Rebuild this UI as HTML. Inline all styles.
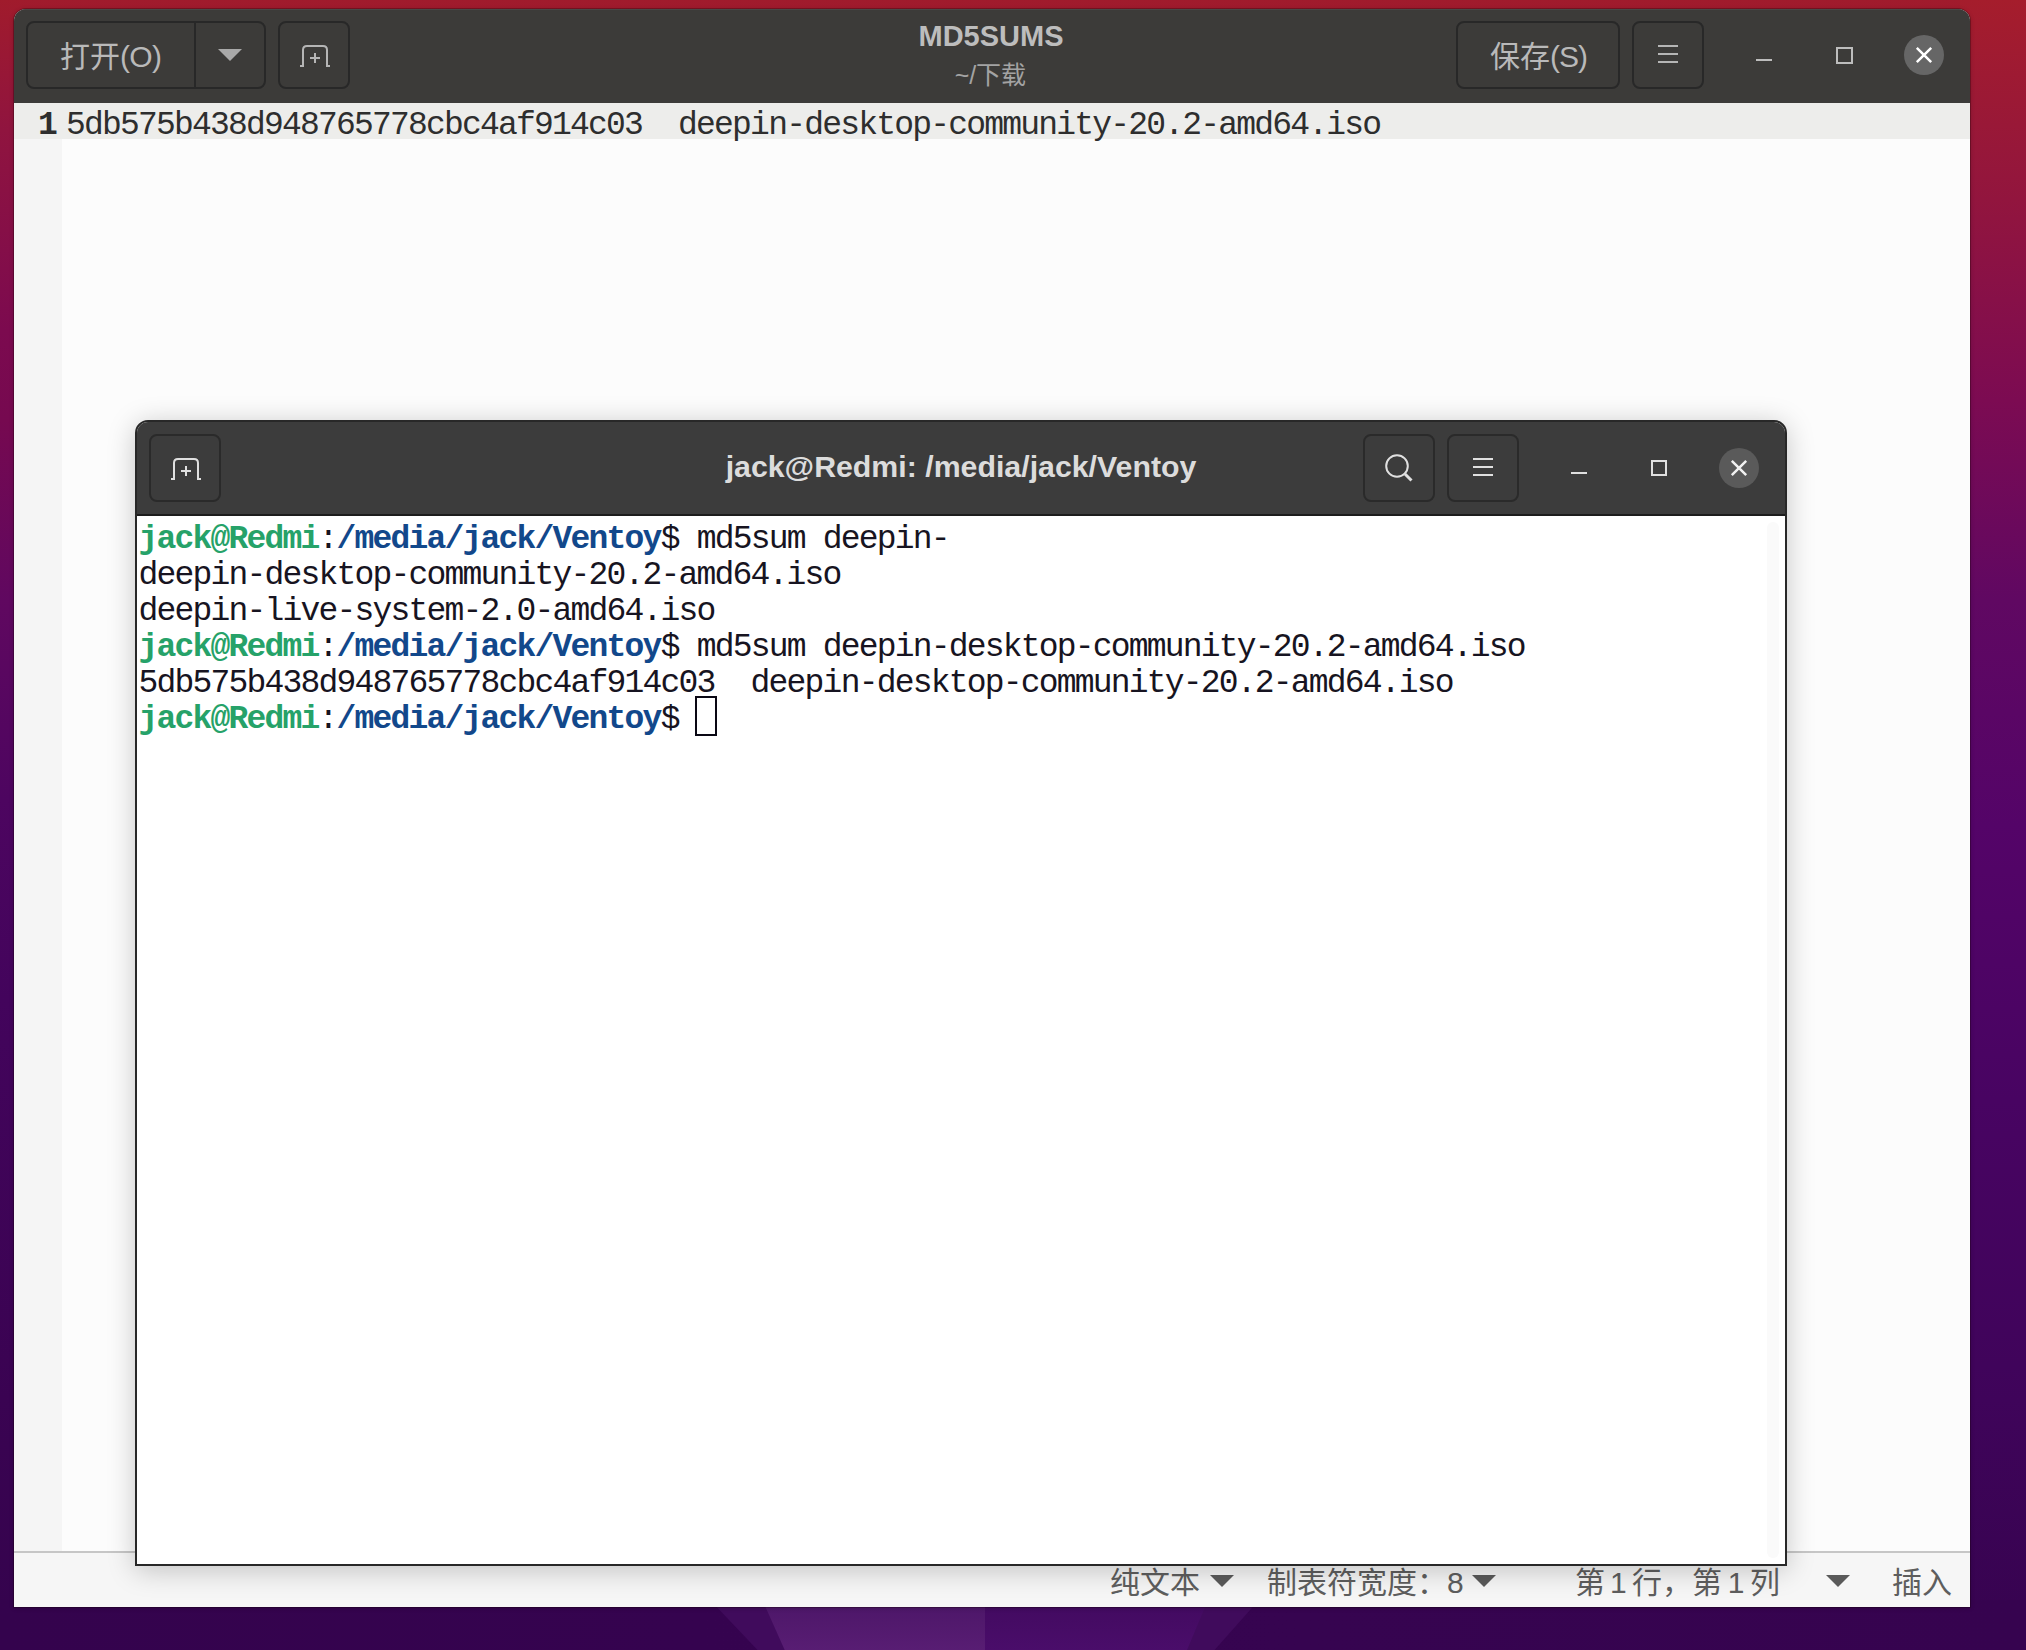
<!DOCTYPE html>
<html lang="zh-CN"><head><meta charset="utf-8">
<style>
html,body{margin:0;padding:0;width:2026px;height:1650px;overflow:hidden;}
body{position:relative;font-family:"Liberation Sans",sans-serif;
background:linear-gradient(to bottom,#a01b2c 0px,#90143f 130px,#7c0a4f 330px,#760950 420px,#600860 600px,#4d0560 800px,#43045c 1000px,#3a0352 1400px,#34034d 1650px);}
.abs{position:absolute;}
#gedit{left:14px;top:9px;width:1956px;height:1598px;border-radius:12px 12px 0 0;overflow:hidden;
box-shadow:0 0 0 1px rgba(20,0,5,0.28),0 1px 5px rgba(0,0,0,0.22);background:#fcfcfc;}
#ghead{left:0;top:0;width:1956px;height:94px;background:#3c3b39;box-shadow:inset 0 1px 0 #484847;}
.btn{position:absolute;box-sizing:border-box;border:2px solid #282828;border-radius:8px;}
.glbl{color:#b9b9b9;font-size:30px;white-space:nowrap;}
#curline{left:0;top:94px;width:1956px;height:36px;background:#ededeb;}
#gutter{left:0;top:130px;width:48px;height:1412px;background:#f5f5f5;}
#gsep{left:0;top:1542px;width:1956px;height:2px;background:#c6c6c6;}
#gstatus{left:0;top:1544px;width:1956px;height:54px;background:#f6f6f6;}
.mono{font-family:"Liberation Mono",monospace;font-size:33px;letter-spacing:-1.8px;white-space:pre;line-height:36px;}
.stat{color:#5e5e5e;font-size:30px;white-space:nowrap;}
#term{left:135px;top:420px;width:1652px;height:1146px;box-sizing:border-box;border:2px solid #282828;border-radius:13px 13px 0 0;overflow:hidden;background:#fff;
box-shadow:0 4px 28px rgba(0,0,0,0.22);}
#thead{left:0;top:0;width:1648px;height:92px;background:#3c3c3c;border-bottom:2px solid #1c1c1c;}
.tbtn{position:absolute;box-sizing:border-box;border:2px solid #2a2a2a;border-radius:8px;}
.g{color:#26a269;font-weight:bold;}
.b{color:#12488b;font-weight:bold;}
.k{color:#171421;}
</style></head><body>

<div class="abs" style="left:1960px;top:0;width:66px;height:1650px;background:linear-gradient(to bottom,#a51d2c 0px,#92153e 200px,#7c0b52 400px,#600862 600px,#540468 825px,#480462 1100px,#3f045a 1400px,#36034f 1650px);"></div>
<div class="abs" style="left:0;top:1600px;width:2026px;height:50px;background:linear-gradient(to right,#34034d 0px,#35034f 700px,#360450 1300px,#36034f 2026px);"></div>
<!-- bottom wallpaper shapes -->
<svg class="abs" style="left:0;top:1600px" width="2026" height="50">
<defs><linearGradient id="mg" x1="0" y1="0" x2="0" y2="1"><stop offset="0" stop-color="#4c1668"/><stop offset="1" stop-color="#581d73"/></linearGradient>
<linearGradient id="rg" x1="0" y1="0" x2="0" y2="1"><stop offset="0" stop-color="#420a60"/><stop offset="1" stop-color="#4a0d6a"/></linearGradient></defs>
<polygon points="710,0 1259,0 1214.6,50 757.5,50" fill="#400b5c"/>
<polygon points="762.4,0 985,0 985,50 784.7,50" fill="url(#mg)"/>
<polygon points="985,0 1208,0 1187,50 985,50" fill="url(#rg)"/>
</svg>

<div id="gedit" class="abs">
  <div id="ghead" class="abs">
    <div class="btn" style="left:12px;top:12px;width:240px;height:68px;"></div>
    <div class="abs" style="left:180px;top:14px;width:2px;height:64px;background:#282828"></div>
    <div class="abs glbl" style="left:46px;top:23px;">打开<span style="letter-spacing:-0.7px">(O)</span></div>
    <svg class="abs" style="left:204px;top:40px" width="24" height="13"><polygon points="0,0 24,0 12,12" fill="#a9a9a9"/></svg>
    <div class="btn" style="left:264px;top:12px;width:72px;height:68px;"></div>
    <svg class="abs" style="left:264px;top:12px" width="72" height="68" fill="none" stroke="#b5b5b5" stroke-width="2">
      <path d="M22,45 H25 V29 Q25,25 29,25 H45 Q49,25 49,29 V45 H52"/>
      <path d="M32,37 H42 M37,32 V42"/>
    </svg>
    <div class="abs" style="left:0;top:10px;width:1954px;text-align:center;color:#bdbdbd;font-weight:bold;font-size:29px;line-height:34px;">MD5SUMS</div>
    <div class="abs" style="left:0;top:51px;width:1953px;text-align:center;color:#a3a3a3;font-size:25px;line-height:30px;">~/下载</div>
    <div class="btn" style="left:1442px;top:12px;width:164px;height:68px;"></div>
    <div class="abs glbl" style="left:1476px;top:23px;">保存<span style="letter-spacing:-1px">(S)</span></div>
    <div class="btn" style="left:1618px;top:12px;width:72px;height:68px;"></div>
    <svg class="abs" style="left:1618px;top:12px" width="72" height="68" fill="none" stroke="#b5b5b5" stroke-width="2">
      <path d="M26,25 H46 M26,33 H46 M26,41 H46"/>
    </svg>
    <svg class="abs" style="left:1730px;top:20px" width="220" height="70">
      <path d="M12,31 H28" stroke="#bdbdbd" stroke-width="2"/>
      <rect x="93" y="19" width="15" height="15" fill="none" stroke="#bdbdbd" stroke-width="2"/>
      <circle cx="180" cy="26" r="20" fill="#666666"/>
      <path d="M172.8,18.8 L187.2,33.2 M187.2,18.8 L172.8,33.2" stroke="#ffffff" stroke-width="2.5"/>
    </svg>
  </div>
  <div id="curline" class="abs"></div>
  <div id="gutter" class="abs"></div>
  <div class="abs mono" style="left:24px;top:98.5px;color:#2e2e2e;font-weight:bold;">1</div>
  <div class="abs mono" style="left:52px;top:98.5px;color:#2e2e2e;">5db575b438d948765778cbc4af914c03  deepin-desktop-community-20.2-amd64.iso</div>
  <div id="gsep" class="abs"></div>
  <div id="gstatus" class="abs">
    <div class="abs stat" style="left:1096px;top:4.5px;">纯文本</div>
    <svg class="abs" style="left:1196px;top:22px" width="24" height="13"><polygon points="0,0 24,0 12,12" fill="#5a5a5a"/></svg>
    <div class="abs stat" style="left:1253px;top:4.5px;">制表符宽度：8</div>
    <svg class="abs" style="left:1458px;top:22px" width="24" height="13"><polygon points="0,0 24,0 12,12" fill="#5a5a5a"/></svg>
    <div class="abs stat" style="left:1560.5px;top:4.5px;word-spacing:-2.8px;">第 1 行，第 1 列</div>
    <svg class="abs" style="left:1812px;top:22px" width="24" height="13"><polygon points="0,0 24,0 12,12" fill="#5a5a5a"/></svg>
    <div class="abs stat" style="left:1878px;top:4.5px;">插入</div>
  </div>
</div>

<div id="term" class="abs">
  <div id="thead" class="abs">
    <div class="tbtn" style="left:12px;top:12px;width:72px;height:68px;"></div>
    <svg class="abs" style="left:12px;top:12px" width="72" height="68" fill="none" stroke="#e0e0e0" stroke-width="2">
      <path d="M22,45 H25 V29 Q25,25 29,25 H45 Q49,25 49,29 V45 H52"/>
      <path d="M32,37 H42 M37,32 V42"/>
    </svg>
    <div class="abs" style="left:0;top:28px;width:1648px;text-align:center;color:#dcdcdc;font-weight:bold;font-size:30.3px;line-height:34px;">jack@Redmi: /media/jack/Ventoy</div>
    <div class="tbtn" style="left:1226px;top:12px;width:72px;height:68px;"></div>
    <svg class="abs" style="left:1226px;top:12px" width="72" height="68" fill="none" stroke="#e0e0e0" stroke-width="2">
      <circle cx="34" cy="32" r="10.8"/>
      <path d="M42,40 L48.5,46.5" stroke-width="3"/>
    </svg>
    <div class="tbtn" style="left:1310px;top:12px;width:72px;height:68px;"></div>
    <svg class="abs" style="left:1310px;top:12px" width="72" height="68" fill="none" stroke="#e0e0e0" stroke-width="2">
      <path d="M26,25 H46 M26,33 H46 M26,41 H46"/>
    </svg>
    <svg class="abs" style="left:1420px;top:12px" width="220" height="70">
      <path d="M14,39 H30" stroke="#e0e0e0" stroke-width="2"/>
      <rect x="95" y="27" width="14" height="14" fill="none" stroke="#e0e0e0" stroke-width="2"/>
      <circle cx="182" cy="34" r="20" fill="#5a5a5a"/>
      <path d="M174.8,26.8 L189.2,41.2 M189.2,26.8 L174.8,41.2" stroke="#f0f0f0" stroke-width="2.5"/>
    </svg>
  </div>
  <div class="abs mono" style="left:1.5px;top:99.5px;"><span class="g">jack@Redmi</span><span class="k">:</span><span class="b">/media/jack/Ventoy</span><span class="k">$ md5sum deepin-</span>
<span class="k">deepin-desktop-community-20.2-amd64.iso</span>
<span class="k">deepin-live-system-2.0-amd64.iso</span>
<span class="g">jack@Redmi</span><span class="k">:</span><span class="b">/media/jack/Ventoy</span><span class="k">$ md5sum deepin-desktop-community-20.2-amd64.iso</span>
<span class="k">5db575b438d948765778cbc4af914c03  deepin-desktop-community-20.2-amd64.iso</span>
<span class="g">jack@Redmi</span><span class="k">:</span><span class="b">/media/jack/Ventoy</span><span class="k">$ </span></div>
  <div class="abs" style="left:1630px;top:100px;width:12px;height:1036px;border-radius:6px;background:#fafafa;"></div>
  <div class="abs" style="left:558px;top:274px;width:22px;height:40px;box-sizing:border-box;border:2px solid #0a0814;"></div>
</div>

</body></html>
